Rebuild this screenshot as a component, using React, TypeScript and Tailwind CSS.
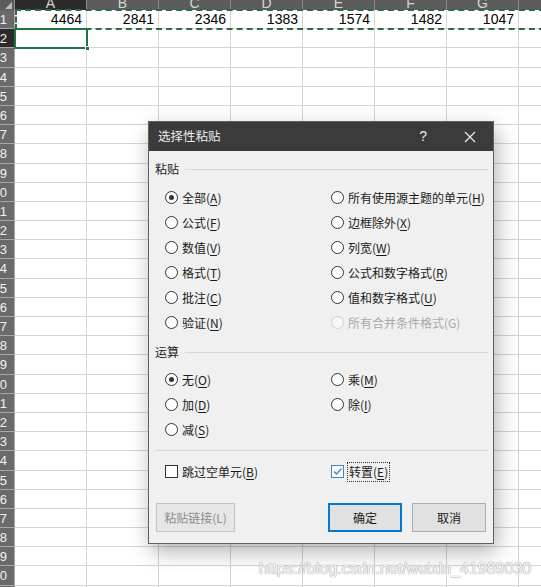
import React from "react";

const cols = ["A", "B", "C", "D", "E", "F", "G", "H"];
const firstRow = ["4464", "2841", "2346", "1383", "1574", "1482", "1047", ""];
const rows = Array.from({ length: 31 }, (_, i) => i + 1);

function Radio({ checked = false, disabled = false }: { checked?: boolean; disabled?: boolean }) {
  return (
    <span
      className={
        disabled
          ? "w-[13px] h-[13px] rounded-full border border-[#cfcfcf] bg-[#f7f7f7] shrink-0"
          : "w-[13px] h-[13px] rounded-full border border-[#333333] bg-white shrink-0 flex items-center justify-center"
      }
    >
      {checked && <span className="w-[5px] h-[5px] rounded-full bg-[#333333]" />}
    </span>
  );
}

function Check({ checked = false }: { checked?: boolean }) {
  if (checked) {
    return (
      <span className="w-[13px] h-[13px] border border-[#3f82c9] bg-white shrink-0 flex items-center justify-center">
        <svg width="11" height="11" viewBox="0 0 11 11">
          <path d="M2 5.5 L4.5 8 L9.5 2.5" fill="none" stroke="#3f82c9" strokeWidth="1.3" />
        </svg>
      </span>
    );
  }
  return <span className="w-[13px] h-[13px] border border-[#333333] bg-white shrink-0" />;
}

function Option({
  label,
  k,
  checked = false,
  disabled = false,
}: {
  label: string;
  k: string;
  checked?: boolean;
  disabled?: boolean;
}) {
  return (
    <div className="flex items-center h-[25px] gap-[4px]">
      <Radio checked={checked} disabled={disabled} />
      {disabled ? (
        <span className="text-[#a8a8a8]">
          {label}({k})
        </span>
      ) : (
        <span>
          {label}(<span className="underline underline-offset-2">{k}</span>)
        </span>
      )}
    </div>
  );
}

function Section({ title }: { title: string }) {
  return (
    <div className="flex items-center h-[18px] gap-[6px]">
      <span>{title}</span>
      <div className="flex-1 h-px bg-[#d8d8d8]" />
    </div>
  );
}

export default function App() {
  return (
    <div className="relative w-[541px] h-[587px] overflow-hidden bg-white font-['Liberation_Sans',sans-serif]">
      {/* column headers */}
      <div className="flex h-[10px]">
        <div className="w-[15px] h-[10px] shrink-0 bg-[#5c5c5c] border-r border-[#8a8a8a] relative">
          <div className="absolute right-[2px] bottom-[1px] w-0 h-0 border-l-[7px] border-l-transparent border-b-[7px] border-b-[#bdbdbd]" />
        </div>
        {cols.map((c, i) => (
          <div
            key={c}
            className={
              i === 0
                ? "w-[72px] shrink-0 h-[10px] overflow-hidden flex justify-center bg-[#2b2b2b] border-r border-[#8a8a8a]"
                : "w-[72px] shrink-0 h-[10px] overflow-hidden flex justify-center bg-[#5c5c5c] border-r border-[#8a8a8a]"
            }
          >
            <span className="text-[14px] leading-none -mt-[4px] text-[#d6d6d6]">{c}</span>
          </div>
        ))}
      </div>

      {/* rows */}
      {rows.map((r) => (
        <div key={r} className="flex h-[19.2px]">
          <div
            className={
              r === 2
                ? "w-[15px] shrink-0 bg-[#2b2b2b] border-b border-r border-[#a8a8a8] text-[#f2f2f2] text-[13px] leading-[19px] pr-[7px] overflow-hidden whitespace-nowrap flex justify-end"
                : "w-[15px] shrink-0 bg-[#6a6a6a] border-b border-r border-[#a8a8a8] text-[#f2f2f2] text-[13px] leading-[19px] pr-[7px] overflow-hidden whitespace-nowrap flex justify-end"
            }
          >
            <span className="shrink-0">{r}</span>
          </div>
          {cols.map((c, i) => (
            <div
              key={c}
              className="w-[72px] shrink-0 border-r border-b border-[#d4d4d4] text-right pr-[4px] text-[14px] leading-[18px] text-black"
            >
              {r === 1 ? firstRow[i] : ""}
            </div>
          ))}
        </div>
      ))}

      {/* copy marquee on row 1 */}
      <div className="absolute left-[15px] top-[9px] w-[540px] h-[21px] border-2 border-dashed border-[#2e6b45]" />
      {/* active cell A2 */}
      <div className="absolute left-[14px] top-[28px] w-[74px] h-[21px] border-2 border-[#217346]">
        <div className="absolute -right-[4px] -bottom-[4px] w-[5px] h-[5px] bg-[#217346] border border-white" />
      </div>

      {/* dialog */}
      <div className="absolute left-[148px] top-[121px] w-[346px] h-[423px] border border-[#5f5f5f] bg-[#f0f0f0] shadow-[3px_8px_20px_rgba(0,0,0,0.3)] flex flex-col font-['Noto_Sans_CJK_SC',sans-serif] text-[12px] text-[#1a1a1a]">
        <div className="h-[29px] bg-[#3b3b3b] flex items-center pl-[9px] text-[#ececec] shrink-0">
          <span className="text-[12.5px]">选择性粘贴</span>
          <span className="ml-auto text-[14px] font-['Liberation_Sans',sans-serif] mr-[37px]">?</span>
          <svg width="12" height="12" viewBox="0 0 12 12" className="mr-[17px]">
            <path d="M1 1 L11 11 M11 1 L1 11" stroke="#ececec" strokeWidth="1.2" />
          </svg>
        </div>

        <div className="flex flex-col pl-[6px] pr-[5px]">
          <div className="mt-[9px]">
            <Section title="粘贴" />
          </div>
          <div className="grid grid-cols-[166px_1fr] pl-[10px] mt-[7px]">
            <div className="flex flex-col">
              <Option label="全部" k="A" checked />
              <Option label="公式" k="F" />
              <Option label="数值" k="V" />
              <Option label="格式" k="T" />
              <Option label="批注" k="C" />
              <Option label="验证" k="N" />
            </div>
            <div className="flex flex-col">
              <Option label="所有使用源主题的单元" k="H" />
              <Option label="边框除外" k="X" />
              <Option label="列宽" k="W" />
              <Option label="公式和数字格式" k="R" />
              <Option label="值和数字格式" k="U" />
              <Option label="所有合并条件格式" k="G" disabled />
            </div>
          </div>

          <div className="mt-[8px]">
            <Section title="运算" />
          </div>
          <div className="grid grid-cols-[166px_1fr] pl-[10px] mt-[6px]">
            <div className="flex flex-col">
              <Option label="无" k="O" checked />
              <Option label="加" k="D" />
              <Option label="减" k="S" />
            </div>
            <div className="flex flex-col">
              <Option label="乘" k="M" />
              <Option label="除" k="I" />
            </div>
          </div>

          <div className="mt-[8px] h-px bg-[#d8d8d8]" />

          <div className="grid grid-cols-[166px_1fr] pl-[10px] mt-[8px]">
            <div className="flex items-center h-[25px] gap-[4px]">
              <Check />
              <span>
                跳过空单元(<span className="underline underline-offset-2">B</span>)
              </span>
            </div>
            <div className="flex items-center h-[25px] gap-[3px]">
              <Check checked />
              <span className="border border-dotted border-[#333] px-[1px] leading-[18px]">
                转置(<span className="underline underline-offset-2">E</span>)
              </span>
            </div>
          </div>

          <div className="flex mt-[19px] pl-[1px] pr-[2px]">
            <button className="w-[79px] h-[29px] border border-[#c4c4c4] bg-[#e6e6e6] text-[#8c8c8c]">
              粘贴链接(L)
            </button>
            <button className="ml-auto w-[74px] h-[29px] border-2 border-[#0078d7] bg-[#e1e1e1] text-[#1a1a1a]">
              确定
            </button>
            <button className="ml-[10px] w-[74px] h-[29px] border border-[#adadad] bg-[#e1e1e1] text-[#1a1a1a]">
              取消
            </button>
          </div>
        </div>
      </div>

      {/* watermark */}
      <div className="absolute left-[259px] top-[559px] text-[16px] leading-[20px] text-[#f6f6f6] [text-shadow:0_0_1px_#9a9a9a,0_0_1px_#9a9a9a] whitespace-nowrap">
        https://blog.csdn.net/weixin_41989030
      </div>
    </div>
  );
}
